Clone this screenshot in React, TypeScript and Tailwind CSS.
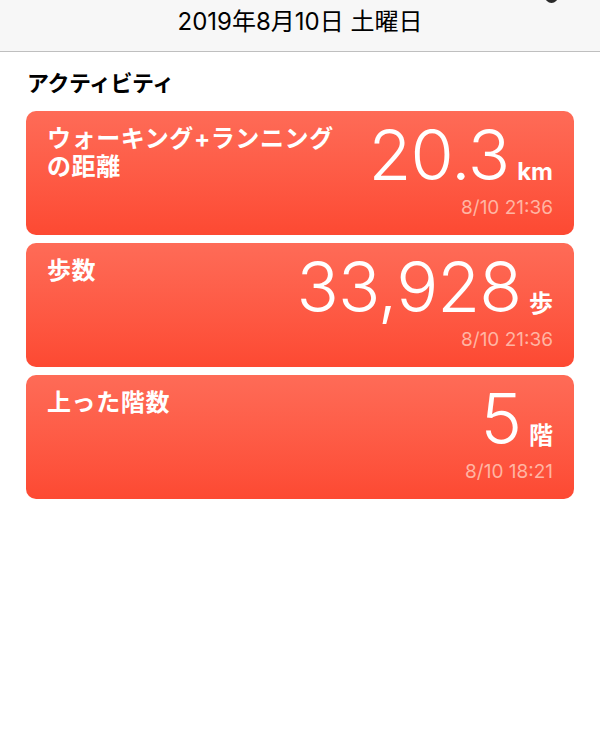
import type { ReactNode } from 'react';

interface Metric {
  title: ReactNode;
  value: string;
  unit: string;
  time: string;
}

const metrics: Metric[] = [
  {
    title: (
      <>
        ウォーキング+ランニング
        <br />
        の距離
      </>
    ),
    value: '20.3',
    unit: 'km',
    time: '8/10 21:36',
  },
  { title: '歩数', value: '33,928', unit: '歩', time: '8/10 21:36' },
  { title: '上った階数', value: '5', unit: '階', time: '8/10 18:21' },
];

function MetricCard({ metric }: { metric: Metric }) {
  return (
    <div className="flex items-start justify-between rounded-[10px] bg-gradient-to-b from-[#fe6b57] to-[#fd4932] pl-[21px] pr-[21px] pt-[9px] pb-[18px] text-white">
      <div className="mt-[5px] text-[24px] font-bold leading-[28px] tracking-[0.6px]">{metric.title}</div>
      <div className="flex flex-col items-end">
        <div className="flex items-baseline">
          <span className="text-[70px] font-light leading-none tracking-[-1px]">{metric.value}</span>
          <span className="ml-[8px] text-[24px] font-bold leading-none">{metric.unit}</span>
        </div>
        <div className="mt-[8px] text-[19px] leading-none text-[#ffb5a3]">{metric.time}</div>
      </div>
    </div>
  );
}

export default function App() {
  return (
    <div className="relative min-h-[746px] w-[600px] overflow-hidden bg-white font-['Inter','Noto_Sans_CJK_JP',sans-serif]">
      {/* Header */}
      <div className="flex h-[52px] justify-center border-b border-[#bfbfbf] bg-[#f7f7f7] pt-[10px]">
        <span className="text-[24px] leading-none text-black">2019年8月10日 土曜日</span>
      </div>
      <div className="absolute left-[545px] top-[-11px] h-[14px] w-[13px] rounded-full bg-[#2a2a2a]" />

      {/* Activity */}
      <div className="px-[26px] pt-[20px]">
        <h2 className="mb-[17px] pl-px text-[22px] font-bold leading-none tracking-[-0.5px] text-black">アクティビティ</h2>
        <div className="flex flex-col gap-[8px]">
          {metrics.map((m) => (
            <MetricCard key={m.time + m.unit} metric={m} />
          ))}
        </div>
      </div>
    </div>
  );
}
